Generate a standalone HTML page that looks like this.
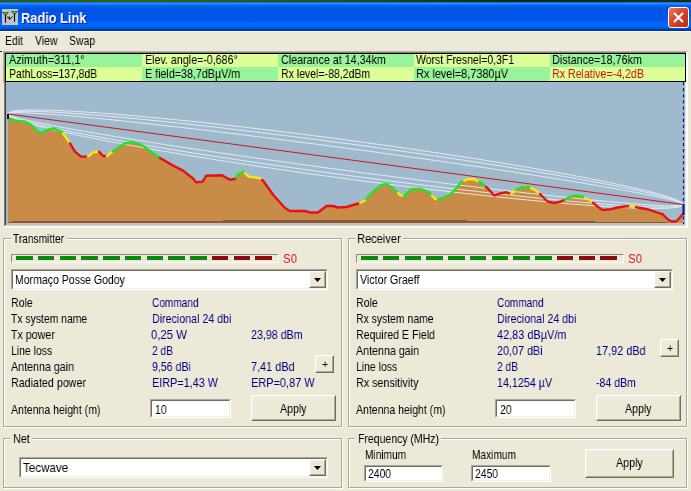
<!DOCTYPE html>
<html><head><meta charset="utf-8"><title>Radio Link</title>
<style>
html,body{margin:0;padding:0;}
body{width:691px;height:491px;background:#ece9d8;position:relative;overflow:hidden;font-family:"Liberation Sans",sans-serif;}
.t{position:absolute;white-space:nowrap;transform-origin:0 0;line-height:16px;display:block;will-change:transform;}
</style></head><body>
<div style="position:absolute;left:0px;top:0px;width:691px;height:2px;background:linear-gradient(to right,#2a5a1a 0%,#2c661a 20%,#20501a 50%,#0c2812 75%,#10301a 100%);"></div>
<div style="position:absolute;left:0px;top:31px;width:691px;height:1px;background:#fbfbf8;"></div>
<div style="position:absolute;left:0px;top:2px;width:691px;height:29px;background:linear-gradient(to bottom,#0048d8 0%,#3593ff 4%,#288eff 6%,#127dff 8%,#036ffc 10%,#0262ee 14%,#0057e5 20%,#0054e3 24%,#0055eb 56%,#005bf5 66%,#026afe 76%,#0062ef 86%,#0052d6 92%,#0040ab 94%,#003092 100%);"></div>
<svg style="position:absolute;left:2px;top:9px" width="16" height="16" viewBox="0 0 16 16">
<rect width="16" height="16" fill="#c4c2c4"/>
<polygon points="0,3 7,3 3.5,7" fill="#104010"/>
<polygon points="9,2 16,2 12.5,6" fill="#104010"/>
<polygon points="1.2,3.6 5.8,3.6 3.5,6.2" fill="#30e050"/>
<polygon points="10.2,2.6 14.8,2.6 12.5,5.2" fill="#30e050"/>
<path d="M3.5 5.5 V13.8 M12.5 4.5 V12.8" stroke="#000" stroke-width="1.1" fill="none"/>
<path d="M4.9 7.9 L6.5 9 L7.2 7.7 L7.5 10.6 L10.7 7.4" stroke="#000" stroke-width="0.9" fill="none"/>
</svg>
<span class="t" style="left:21.05px;top:9.95px;font-size:14px;color:#fff;font-weight:bold;transform:scaleX(0.9140);text-shadow:1px 1px 0 #0a1e8c;">Radio Link</span>
<div style="position:absolute;left:668px;top:7px;width:19px;height:19px;border:1px solid #fff;border-radius:3px;background:linear-gradient(135deg,#e8806a 0%,#dd4f33 35%,#c9371c 75%,#b52a12 100%);"></div>
<svg style="position:absolute;left:668px;top:7px" width="21" height="21" viewBox="0 0 21 21"><path d="M6 6 L15 15 M15 6 L6 15" stroke="#fff" stroke-width="2.2" fill="none"/></svg>
<span class="t" style="left:5.48px;top:32.84px;font-size:12px;color:#000;transform:scaleX(0.8705);">Edit</span>
<span class="t" style="left:35.48px;top:32.84px;font-size:12px;color:#000;transform:scaleX(0.8646);">View</span>
<span class="t" style="left:69.48px;top:32.84px;font-size:12px;color:#000;transform:scaleX(0.8728);">Swap</span>
<div style="position:absolute;left:0px;top:51px;width:2px;height:1px;background:#222;"></div>
<div style="position:absolute;left:3px;top:51px;width:684px;height:32px;background:#b8b4a6;"></div>
<div style="position:absolute;left:4px;top:52px;width:683px;height:30px;background:#808080;"></div>
<div style="position:absolute;left:686px;top:52px;width:2px;height:31px;background:#fff;"></div>
<div style="position:absolute;left:5px;top:53px;width:681px;height:29px;background:#000;"></div>
<div style="position:absolute;left:6px;top:54px;width:679px;height:27px;background:#98f498;"></div>
<div style="position:absolute;left:6px;top:54px;width:135.5px;height:13px;background:#98f498;"></div>
<div style="position:absolute;left:6px;top:67px;width:135.5px;height:14px;background:#dcff98;"></div>
<div style="position:absolute;left:141.5px;top:54px;width:136px;height:13px;background:#dcff98;"></div>
<div style="position:absolute;left:141.5px;top:67px;width:136px;height:14px;background:#98f498;"></div>
<div style="position:absolute;left:277.5px;top:54px;width:136px;height:13px;background:#98f498;"></div>
<div style="position:absolute;left:277.5px;top:67px;width:136px;height:14px;background:#dcff98;"></div>
<div style="position:absolute;left:413.5px;top:54px;width:136px;height:13px;background:#dcff98;"></div>
<div style="position:absolute;left:413.5px;top:67px;width:136px;height:14px;background:#98f498;"></div>
<div style="position:absolute;left:549.5px;top:54px;width:135.5px;height:13px;background:#98f498;"></div>
<div style="position:absolute;left:549.5px;top:67px;width:135.5px;height:14px;background:#dcff98;"></div>
<span class="t" style="left:8.50px;top:52.00px;font-size:13px;color:#000;transform:scaleX(0.8279);">Azimuth=311,1°</span>
<span class="t" style="left:9.32px;top:66.00px;font-size:13px;color:#000;transform:scaleX(0.8002);">PathLoss=137,8dB</span>
<span class="t" style="left:145.21px;top:52.00px;font-size:13px;color:#000;transform:scaleX(0.8212);">Elev. angle=-0,686°</span>
<span class="t" style="left:145.21px;top:66.00px;font-size:13px;color:#000;transform:scaleX(0.8232);">E field=38,7dBµV/m</span>
<span class="t" style="left:280.81px;top:52.00px;font-size:13px;color:#000;transform:scaleX(0.8248);">Clearance at 14,34km</span>
<span class="t" style="left:280.81px;top:66.00px;font-size:13px;color:#000;transform:scaleX(0.8095);">Rx level=-88,2dBm</span>
<span class="t" style="left:416.12px;top:52.00px;font-size:13px;color:#000;transform:scaleX(0.8082);">Worst Fresnel=0,3F1</span>
<span class="t" style="left:416.10px;top:66.00px;font-size:13px;color:#000;transform:scaleX(0.8392);">Rx level=8,7380µV</span>
<span class="t" style="left:552.10px;top:52.00px;font-size:13px;color:#000;transform:scaleX(0.8322);">Distance=18,76km</span>
<span class="t" style="left:552.11px;top:66.00px;font-size:13px;color:#d01010;transform:scaleX(0.8179);">Rx Relative=-4,2dB</span>
<svg style="position:absolute;left:0;top:0" width="691" height="491" viewBox="0 0 691 491">
<defs><clipPath id="cc"><rect x="6" y="82" width="679" height="143"/></clipPath></defs>
<rect x="4" y="82" width="1" height="145" fill="#808080"/><rect x="5" y="82" width="1" height="144" fill="#404040"/>
<rect x="5" y="225" width="682" height="1" fill="#d4d0c8"/><rect x="4" y="226" width="684" height="1" fill="#fff"/><rect x="4" y="227" width="684" height="1" fill="#f6f4ec"/>
<rect x="685" y="82" width="1" height="144" fill="#e4e2dc"/><rect x="686" y="82" width="2" height="145" fill="#fff"/>
<g clip-path="url(#cc)">
<rect x="6" y="82" width="680" height="143" fill="#9fbacd"/>
<polygon points="8,224 8.0,118.5 16.6,120.6 25.0,121.6 31.6,125.0 36.6,130.6 41.6,133.3 46.6,130.0 53.3,128.3 61.6,131.6 66.6,138.3 70.0,143.3 75.0,151.6 81.0,156.6 88.0,156.6 93.0,152.3 99.0,151.6 103.0,156.0 107.0,156.0 113.0,151.0 125.0,143.3 133.0,142.3 143.0,145.6 153.0,153.3 160.0,158.0 173.0,165.6 183.0,170.6 193.0,178.5 196.0,182.3 202.5,181.7 206.2,175.8 222.0,175.2 230.0,179.7 235.0,179.0 238.3,174.0 243.3,171.5 248.3,176.5 260.0,178.2 263.3,181.0 273.3,195.0 285.0,208.0 290.0,211.0 305.0,211.0 310.0,212.5 318.0,212.5 326.5,206.0 333.0,206.0 338.0,207.5 346.5,207.0 360.0,203.0 365.0,200.5 373.0,191.5 381.5,185.0 386.5,184.0 393.0,188.0 400.0,195.0 404.0,196.0 411.5,189.0 421.5,189.0 430.0,193.0 435.0,199.0 440.0,199.0 450.0,195.0 456.5,188.0 461.0,182.0 467.7,179.0 474.3,179.2 482.6,184.0 489.3,190.0 494.3,195.5 501.0,193.2 506.0,192.2 511.0,194.2 516.0,190.0 521.0,187.2 529.0,187.2 536.0,190.5 541.0,195.0 547.5,201.5 554.0,203.0 561.0,201.5 567.5,198.2 574.0,195.5 582.5,196.5 591.0,201.0 597.5,206.5 602.5,210.0 611.0,209.2 617.5,207.5 624.0,206.5 632.5,206.0 637.5,207.5 647.5,209.2 656.0,212.2 662.5,214.2 668.0,219.5 671.5,221.5 676.0,221.5 679.0,218.5 683.0,214.0 683,224" fill="#c88c48"/>
<rect x="6" y="223" width="680" height="2" fill="#c2c2c2"/>
<rect x="8" y="222" width="660" height="1" fill="#8a5a38"/>
<rect x="12" y="221" width="583" height="1" fill="#8a5a38"/>
<rect x="223" y="220" width="244" height="1" fill="#8a5a38"/>
<polyline points="8.0,114.0 8.0,113.8 8.2,113.7 8.4,113.5 8.7,113.4 9.0,113.3 9.5,113.1 10.0,113.0 10.7,113.0 11.4,112.9 12.2,112.8 13.0,112.7 14.0,112.7 15.0,112.7 16.1,112.6 17.3,112.6 18.6,112.6 20.0,112.6 21.4,112.7 22.9,112.7 24.5,112.8 26.2,112.8 28.0,112.9 29.8,113.0 31.7,113.1 33.7,113.2 35.8,113.3 37.9,113.4 40.1,113.5 42.4,113.7 44.8,113.8 47.2,114.0 49.7,114.2 52.3,114.4 55.0,114.6 57.7,114.8 60.5,115.0 63.4,115.3 66.4,115.5 69.4,115.8 72.5,116.1 75.6,116.3 78.8,116.6 82.1,116.9 85.5,117.2 88.9,117.6 92.3,117.9 95.9,118.2 99.5,118.6 103.1,119.0 106.9,119.3 110.6,119.7 114.5,120.1 118.4,120.5 122.3,120.9 126.3,121.3 130.4,121.8 134.5,122.2 138.6,122.7 142.9,123.1 147.1,123.6 151.4,124.1 155.8,124.6 160.2,125.0 164.7,125.5 169.2,126.1 173.7,126.6 178.3,127.1 182.9,127.6 187.6,128.2 192.3,128.7 197.0,129.3 201.8,129.8 206.6,130.4 211.5,131.0 216.3,131.6 221.3,132.2 226.2,132.8 231.2,133.4 236.2,134.0 241.2,134.6 246.3,135.2 251.3,135.9 256.4,136.5 261.6,137.1 266.7,137.8 271.9,138.4 277.1,139.1 282.3,139.8 287.5,140.4 292.7,141.1 297.9,141.8 303.2,142.5 308.5,143.2 313.7,143.8 319.0,144.5 324.3,145.2 329.6,145.9 334.9,146.6 340.2,147.3 345.5,148.1 350.8,148.8 356.1,149.5 361.4,150.2 366.7,150.9 372.0,151.6 377.3,152.4 382.5,153.1 387.8,153.8 393.1,154.5 398.3,155.3 403.5,156.0 408.7,156.7 413.9,157.5 419.1,158.2 424.3,158.9 429.4,159.7 434.6,160.4 439.7,161.1 444.7,161.9 449.8,162.6 454.8,163.3 459.8,164.0 464.8,164.8 469.7,165.5 474.7,166.2 479.5,166.9 484.4,167.7 489.2,168.4 494.0,169.1 498.7,169.8 503.4,170.5 508.1,171.2 512.7,171.9 517.3,172.6 521.8,173.3 526.3,174.0 530.8,174.7 535.2,175.4 539.6,176.1 543.9,176.8 548.1,177.5 552.4,178.1 556.5,178.8 560.6,179.5 564.7,180.1 568.7,180.8 572.6,181.4 576.5,182.1 580.4,182.7 584.1,183.3 587.9,184.0 591.5,184.6 595.1,185.2 598.7,185.8 602.1,186.4 605.5,187.0 608.9,187.6 612.2,188.1 615.4,188.7 618.5,189.3 621.6,189.8 624.6,190.4 627.6,190.9 630.5,191.5 633.3,192.0 636.0,192.5 638.7,193.0 641.3,193.5 643.8,194.0 646.2,194.5 648.6,195.0 650.9,195.4 653.1,195.9 655.2,196.3 657.3,196.8 659.3,197.2 661.2,197.6 663.0,198.0 664.8,198.4 666.5,198.8 668.1,199.2 669.6,199.6 671.0,199.9 672.4,200.3 673.7,200.6 674.9,201.0 676.0,201.3 677.0,201.6 678.0,201.9 678.8,202.2 679.6,202.5 680.3,202.7 681.0,203.0 681.5,203.2 682.0,203.5 682.3,203.7 682.6,203.9 682.8,204.1 683.0,204.3 683.0,204.5" fill="none" stroke="#eaf0f5" stroke-width="0.9"/>
<polyline points="8.0,114.0 8.0,114.2 8.2,114.4 8.4,114.6 8.7,114.8 9.0,115.0 9.5,115.3 10.0,115.5 10.7,115.8 11.4,116.0 12.2,116.3 13.0,116.6 14.0,116.9 15.0,117.2 16.1,117.5 17.3,117.9 18.6,118.2 20.0,118.6 21.4,118.9 22.9,119.3 24.5,119.7 26.2,120.1 28.0,120.5 29.8,120.9 31.7,121.3 33.7,121.7 35.8,122.2 37.9,122.6 40.1,123.1 42.4,123.5 44.8,124.0 47.2,124.5 49.7,125.0 52.3,125.5 55.0,126.0 57.7,126.5 60.5,127.0 63.4,127.6 66.4,128.1 69.4,128.7 72.5,129.2 75.6,129.8 78.8,130.4 82.1,130.9 85.5,131.5 88.9,132.1 92.3,132.7 95.9,133.3 99.5,133.9 103.1,134.5 106.9,135.2 110.6,135.8 114.5,136.4 118.4,137.1 122.3,137.7 126.3,138.4 130.4,139.0 134.5,139.7 138.6,140.4 142.9,141.0 147.1,141.7 151.4,142.4 155.8,143.1 160.2,143.8 164.7,144.5 169.2,145.2 173.7,145.9 178.3,146.6 182.9,147.3 187.6,148.0 192.3,148.7 197.0,149.4 201.8,150.1 206.6,150.8 211.5,151.6 216.3,152.3 221.3,153.0 226.2,153.7 231.2,154.5 236.2,155.2 241.2,155.9 246.3,156.6 251.3,157.4 256.4,158.1 261.6,158.8 266.7,159.6 271.9,160.3 277.1,161.0 282.3,161.8 287.5,162.5 292.7,163.2 297.9,164.0 303.2,164.7 308.5,165.4 313.7,166.1 319.0,166.9 324.3,167.6 329.6,168.3 334.9,169.0 340.2,169.7 345.5,170.4 350.8,171.2 356.1,171.9 361.4,172.6 366.7,173.3 372.0,174.0 377.3,174.7 382.5,175.3 387.8,176.0 393.1,176.7 398.3,177.4 403.5,178.1 408.7,178.7 413.9,179.4 419.1,180.1 424.3,180.7 429.4,181.4 434.6,182.0 439.7,182.6 444.7,183.3 449.8,183.9 454.8,184.5 459.8,185.1 464.8,185.7 469.7,186.3 474.7,186.9 479.5,187.5 484.4,188.1 489.2,188.7 494.0,189.2 498.7,189.8 503.4,190.3 508.1,190.9 512.7,191.4 517.3,191.9 521.8,192.4 526.3,193.0 530.8,193.5 535.2,193.9 539.6,194.4 543.9,194.9 548.1,195.4 552.4,195.8 556.5,196.3 560.6,196.7 564.7,197.2 568.7,197.6 572.6,198.0 576.5,198.4 580.4,198.8 584.1,199.2 587.9,199.5 591.5,199.9 595.1,200.3 598.7,200.6 602.1,200.9 605.5,201.3 608.9,201.6 612.2,201.9 615.4,202.2 618.5,202.4 621.6,202.7 624.6,203.0 627.6,203.2 630.5,203.5 633.3,203.7 636.0,203.9 638.7,204.1 641.3,204.3 643.8,204.5 646.2,204.7 648.6,204.8 650.9,205.0 653.1,205.1 655.2,205.2 657.3,205.3 659.3,205.4 661.2,205.5 663.0,205.6 664.8,205.7 666.5,205.7 668.1,205.8 669.6,205.8 671.0,205.9 672.4,205.9 673.7,205.9 674.9,205.9 676.0,205.8 677.0,205.8 678.0,205.8 678.8,205.7 679.6,205.6 680.3,205.5 681.0,205.5 681.5,205.4 682.0,205.2 682.3,205.1 682.6,205.0 682.8,204.8 683.0,204.7 683.0,204.5" fill="none" stroke="#eaf0f5" stroke-width="0.9"/>
<polyline points="8.0,114.0 8.0,113.8 8.2,113.5 8.4,113.3 8.7,113.1 9.0,112.9 9.5,112.7 10.0,112.5 10.7,112.4 11.4,112.2 12.2,112.1 13.0,112.0 14.0,111.8 15.0,111.7 16.1,111.6 17.3,111.6 18.6,111.5 20.0,111.4 21.4,111.4 22.9,111.3 24.5,111.3 26.2,111.3 28.0,111.3 29.8,111.3 31.7,111.3 33.7,111.4 35.8,111.4 37.9,111.5 40.1,111.6 42.4,111.6 44.8,111.7 47.2,111.8 49.7,112.0 52.3,112.1 55.0,112.2 57.7,112.4 60.5,112.6 63.4,112.7 66.4,112.9 69.4,113.1 72.5,113.3 75.6,113.6 78.8,113.8 82.1,114.0 85.5,114.3 88.9,114.6 92.3,114.8 95.9,115.1 99.5,115.4 103.1,115.7 106.9,116.1 110.6,116.4 114.5,116.7 118.4,117.1 122.3,117.4 126.3,117.8 130.4,118.2 134.5,118.6 138.6,119.0 142.9,119.4 147.1,119.8 151.4,120.3 155.8,120.7 160.2,121.2 164.7,121.6 169.2,122.1 173.7,122.6 178.3,123.1 182.9,123.6 187.6,124.1 192.3,124.6 197.0,125.1 201.8,125.7 206.6,126.2 211.5,126.7 216.3,127.3 221.3,127.9 226.2,128.4 231.2,129.0 236.2,129.6 241.2,130.2 246.3,130.8 251.3,131.4 256.4,132.0 261.6,132.7 266.7,133.3 271.9,133.9 277.1,134.6 282.3,135.2 287.5,135.9 292.7,136.5 297.9,137.2 303.2,137.9 308.5,138.5 313.7,139.2 319.0,139.9 324.3,140.6 329.6,141.3 334.9,142.0 340.2,142.7 345.5,143.4 350.8,144.1 356.1,144.8 361.4,145.6 366.7,146.3 372.0,147.0 377.3,147.7 382.5,148.5 387.8,149.2 393.1,149.9 398.3,150.7 403.5,151.4 408.7,152.2 413.9,152.9 419.1,153.7 424.3,154.4 429.4,155.2 434.6,155.9 439.7,156.7 444.7,157.4 449.8,158.2 454.8,158.9 459.8,159.7 464.8,160.4 469.7,161.2 474.7,161.9 479.5,162.7 484.4,163.4 489.2,164.2 494.0,164.9 498.7,165.7 503.4,166.4 508.1,167.2 512.7,167.9 517.3,168.7 521.8,169.4 526.3,170.1 530.8,170.9 535.2,171.6 539.6,172.3 543.9,173.0 548.1,173.8 552.4,174.5 556.5,175.2 560.6,175.9 564.7,176.6 568.7,177.3 572.6,178.0 576.5,178.7 580.4,179.4 584.1,180.0 587.9,180.7 591.5,181.4 595.1,182.1 598.7,182.7 602.1,183.4 605.5,184.0 608.9,184.7 612.2,185.3 615.4,185.9 618.5,186.5 621.6,187.2 624.6,187.8 627.6,188.4 630.5,189.0 633.3,189.6 636.0,190.1 638.7,190.7 641.3,191.3 643.8,191.8 646.2,192.4 648.6,192.9 650.9,193.4 653.1,194.0 655.2,194.5 657.3,195.0 659.3,195.5 661.2,196.0 663.0,196.5 664.8,196.9 666.5,197.4 668.1,197.8 669.6,198.3 671.0,198.7 672.4,199.1 673.7,199.6 674.9,200.0 676.0,200.3 677.0,200.7 678.0,201.1 678.8,201.5 679.6,201.8 680.3,202.2 681.0,202.5 681.5,202.8 682.0,203.1 682.3,203.4 682.6,203.7 682.8,204.0 683.0,204.2 683.0,204.5" fill="none" stroke="#eaf0f5" stroke-width="0.9"/>
<polyline points="8.0,114.0 8.0,114.3 8.2,114.5 8.4,114.8 8.7,115.1 9.0,115.4 9.5,115.7 10.0,116.0 10.7,116.3 11.4,116.7 12.2,117.0 13.0,117.4 14.0,117.8 15.0,118.2 16.1,118.5 17.3,118.9 18.6,119.4 20.0,119.8 21.4,120.2 22.9,120.7 24.5,121.1 26.2,121.6 28.0,122.0 29.8,122.5 31.7,123.0 33.7,123.5 35.8,124.0 37.9,124.5 40.1,125.1 42.4,125.6 44.8,126.1 47.2,126.7 49.7,127.2 52.3,127.8 55.0,128.4 57.7,128.9 60.5,129.5 63.4,130.1 66.4,130.7 69.4,131.3 72.5,132.0 75.6,132.6 78.8,133.2 82.1,133.8 85.5,134.5 88.9,135.1 92.3,135.8 95.9,136.4 99.5,137.1 103.1,137.8 106.9,138.5 110.6,139.1 114.5,139.8 118.4,140.5 122.3,141.2 126.3,141.9 130.4,142.6 134.5,143.3 138.6,144.0 142.9,144.7 147.1,145.5 151.4,146.2 155.8,146.9 160.2,147.6 164.7,148.4 169.2,149.1 173.7,149.8 178.3,150.6 182.9,151.3 187.6,152.1 192.3,152.8 197.0,153.6 201.8,154.3 206.6,155.1 211.5,155.8 216.3,156.6 221.3,157.3 226.2,158.1 231.2,158.8 236.2,159.6 241.2,160.3 246.3,161.1 251.3,161.8 256.4,162.6 261.6,163.3 266.7,164.1 271.9,164.8 277.1,165.6 282.3,166.3 287.5,167.1 292.7,167.8 297.9,168.6 303.2,169.3 308.5,170.0 313.7,170.8 319.0,171.5 324.3,172.2 329.6,172.9 334.9,173.7 340.2,174.4 345.5,175.1 350.8,175.8 356.1,176.5 361.4,177.2 366.7,177.9 372.0,178.6 377.3,179.3 382.5,180.0 387.8,180.6 393.1,181.3 398.3,182.0 403.5,182.6 408.7,183.3 413.9,183.9 419.1,184.6 424.3,185.2 429.4,185.8 434.6,186.5 439.7,187.1 444.7,187.7 449.8,188.3 454.8,188.9 459.8,189.5 464.8,190.1 469.7,190.6 474.7,191.2 479.5,191.8 484.4,192.3 489.2,192.8 494.0,193.4 498.7,193.9 503.4,194.4 508.1,194.9 512.7,195.4 517.3,195.9 521.8,196.4 526.3,196.9 530.8,197.3 535.2,197.8 539.6,198.2 543.9,198.7 548.1,199.1 552.4,199.5 556.5,199.9 560.6,200.3 564.7,200.7 568.7,201.1 572.6,201.4 576.5,201.8 580.4,202.1 584.1,202.4 587.9,202.8 591.5,203.1 595.1,203.4 598.7,203.7 602.1,203.9 605.5,204.2 608.9,204.5 612.2,204.7 615.4,204.9 618.5,205.2 621.6,205.4 624.6,205.6 627.6,205.8 630.5,205.9 633.3,206.1 636.0,206.3 638.7,206.4 641.3,206.5 643.8,206.7 646.2,206.8 648.6,206.9 650.9,206.9 653.1,207.0 655.2,207.1 657.3,207.1 659.3,207.2 661.2,207.2 663.0,207.2 664.8,207.2 666.5,207.2 668.1,207.2 669.6,207.1 671.0,207.1 672.4,207.0 673.7,206.9 674.9,206.9 676.0,206.8 677.0,206.7 678.0,206.5 678.8,206.4 679.6,206.3 680.3,206.1 681.0,206.0 681.5,205.8 682.0,205.6 682.3,205.4 682.6,205.2 682.8,205.0 683.0,204.7 683.0,204.5" fill="none" stroke="#eaf0f5" stroke-width="0.9"/>
<polyline points="8.0,114.0 8.0,113.7 8.2,113.4 8.4,113.1 8.7,112.9 9.0,112.6 9.5,112.4 10.0,112.1 10.7,111.9 11.4,111.7 12.2,111.5 13.0,111.3 14.0,111.2 15.0,111.0 16.1,110.9 17.3,110.7 18.6,110.6 20.0,110.5 21.4,110.4 22.9,110.3 24.5,110.2 26.2,110.2 28.0,110.1 29.8,110.1 31.7,110.0 33.7,110.0 35.8,110.0 37.9,110.0 40.1,110.0 42.4,110.1 44.8,110.1 47.2,110.2 49.7,110.3 52.3,110.3 55.0,110.4 57.7,110.5 60.5,110.6 63.4,110.8 66.4,110.9 69.4,111.1 72.5,111.2 75.6,111.4 78.8,111.6 82.1,111.8 85.5,112.0 88.9,112.2 92.3,112.5 95.9,112.7 99.5,113.0 103.1,113.3 106.9,113.5 110.6,113.8 114.5,114.1 118.4,114.4 122.3,114.8 126.3,115.1 130.4,115.5 134.5,115.8 138.6,116.2 142.9,116.6 147.1,117.0 151.4,117.4 155.8,117.8 160.2,118.2 164.7,118.6 169.2,119.1 173.7,119.5 178.3,120.0 182.9,120.5 187.6,120.9 192.3,121.4 197.0,121.9 201.8,122.4 206.6,122.9 211.5,123.5 216.3,124.0 221.3,124.6 226.2,125.1 231.2,125.7 236.2,126.2 241.2,126.8 246.3,127.4 251.3,128.0 256.4,128.6 261.6,129.2 266.7,129.8 271.9,130.4 277.1,131.1 282.3,131.7 287.5,132.4 292.7,133.0 297.9,133.7 303.2,134.3 308.5,135.0 313.7,135.7 319.0,136.4 324.3,137.0 329.6,137.7 334.9,138.4 340.2,139.1 345.5,139.9 350.8,140.6 356.1,141.3 361.4,142.0 366.7,142.7 372.0,143.5 377.3,144.2 382.5,144.9 387.8,145.7 393.1,146.4 398.3,147.2 403.5,147.9 408.7,148.7 413.9,149.4 419.1,150.2 424.3,151.0 429.4,151.7 434.6,152.5 439.7,153.2 444.7,154.0 449.8,154.8 454.8,155.6 459.8,156.3 464.8,157.1 469.7,157.9 474.7,158.6 479.5,159.4 484.4,160.2 489.2,161.0 494.0,161.7 498.7,162.5 503.4,163.3 508.1,164.0 512.7,164.8 517.3,165.6 521.8,166.4 526.3,167.1 530.8,167.9 535.2,168.6 539.6,169.4 543.9,170.2 548.1,170.9 552.4,171.7 556.5,172.4 560.6,173.1 564.7,173.9 568.7,174.6 572.6,175.4 576.5,176.1 580.4,176.8 584.1,177.5 587.9,178.2 591.5,179.0 595.1,179.7 598.7,180.4 602.1,181.1 605.5,181.8 608.9,182.4 612.2,183.1 615.4,183.8 618.5,184.5 621.6,185.1 624.6,185.8 627.6,186.4 630.5,187.1 633.3,187.7 636.0,188.3 638.7,188.9 641.3,189.6 643.8,190.2 646.2,190.8 648.6,191.4 650.9,191.9 653.1,192.5 655.2,193.1 657.3,193.6 659.3,194.2 661.2,194.7 663.0,195.3 664.8,195.8 666.5,196.3 668.1,196.8 669.6,197.3 671.0,197.8 672.4,198.3 673.7,198.7 674.9,199.2 676.0,199.6 677.0,200.1 678.0,200.5 678.8,200.9 679.6,201.3 680.3,201.7 681.0,202.1 681.5,202.5 682.0,202.8 682.3,203.2 682.6,203.5 682.8,203.9 683.0,204.2 683.0,204.5" fill="none" stroke="#eaf0f5" stroke-width="0.9"/>
<polyline points="8.0,114.0 8.0,114.3 8.2,114.6 8.4,115.0 8.7,115.3 9.0,115.7 9.5,116.0 10.0,116.4 10.7,116.8 11.4,117.2 12.2,117.6 13.0,118.0 14.0,118.4 15.0,118.9 16.1,119.3 17.3,119.8 18.6,120.2 20.0,120.7 21.4,121.2 22.9,121.7 24.5,122.2 26.2,122.7 28.0,123.2 29.8,123.8 31.7,124.3 33.7,124.9 35.8,125.4 37.9,126.0 40.1,126.6 42.4,127.1 44.8,127.7 47.2,128.3 49.7,128.9 52.3,129.6 55.0,130.2 57.7,130.8 60.5,131.4 63.4,132.1 66.4,132.7 69.4,133.4 72.5,134.0 75.6,134.7 78.8,135.4 82.1,136.1 85.5,136.7 88.9,137.4 92.3,138.1 95.9,138.8 99.5,139.5 103.1,140.3 106.9,141.0 110.6,141.7 114.5,142.4 118.4,143.1 122.3,143.9 126.3,144.6 130.4,145.4 134.5,146.1 138.6,146.8 142.9,147.6 147.1,148.3 151.4,149.1 155.8,149.9 160.2,150.6 164.7,151.4 169.2,152.1 173.7,152.9 178.3,153.7 182.9,154.5 187.6,155.2 192.3,156.0 197.0,156.8 201.8,157.5 206.6,158.3 211.5,159.1 216.3,159.9 221.3,160.6 226.2,161.4 231.2,162.2 236.2,162.9 241.2,163.7 246.3,164.5 251.3,165.3 256.4,166.0 261.6,166.8 266.7,167.5 271.9,168.3 277.1,169.1 282.3,169.8 287.5,170.6 292.7,171.3 297.9,172.1 303.2,172.8 308.5,173.6 313.7,174.3 319.0,175.0 324.3,175.8 329.6,176.5 334.9,177.2 340.2,177.9 345.5,178.6 350.8,179.4 356.1,180.1 361.4,180.8 366.7,181.5 372.0,182.1 377.3,182.8 382.5,183.5 387.8,184.2 393.1,184.8 398.3,185.5 403.5,186.1 408.7,186.8 413.9,187.4 419.1,188.1 424.3,188.7 429.4,189.3 434.6,189.9 439.7,190.5 444.7,191.1 449.8,191.7 454.8,192.3 459.8,192.8 464.8,193.4 469.7,193.9 474.7,194.5 479.5,195.0 484.4,195.6 489.2,196.1 494.0,196.6 498.7,197.1 503.4,197.6 508.1,198.0 512.7,198.5 517.3,199.0 521.8,199.4 526.3,199.9 530.8,200.3 535.2,200.7 539.6,201.1 543.9,201.5 548.1,201.9 552.4,202.3 556.5,202.7 560.6,203.0 564.7,203.4 568.7,203.7 572.6,204.1 576.5,204.4 580.4,204.7 584.1,205.0 587.9,205.2 591.5,205.5 595.1,205.8 598.7,206.0 602.1,206.3 605.5,206.5 608.9,206.7 612.2,206.9 615.4,207.1 618.5,207.3 621.6,207.4 624.6,207.6 627.6,207.7 630.5,207.9 633.3,208.0 636.0,208.1 638.7,208.2 641.3,208.2 643.8,208.3 646.2,208.4 648.6,208.4 650.9,208.5 653.1,208.5 655.2,208.5 657.3,208.5 659.3,208.5 661.2,208.4 663.0,208.4 664.8,208.3 666.5,208.3 668.1,208.2 669.6,208.1 671.0,208.0 672.4,207.9 673.7,207.8 674.9,207.6 676.0,207.5 677.0,207.3 678.0,207.2 678.8,207.0 679.6,206.8 680.3,206.6 681.0,206.4 681.5,206.1 682.0,205.9 682.3,205.6 682.6,205.4 682.8,205.1 683.0,204.8 683.0,204.5" fill="none" stroke="#eaf0f5" stroke-width="0.9"/>
<polyline points="8.0,118.5 16.6,120.6 25.0,121.6 31.6,125.0 36.6,130.6 41.6,133.3 46.6,130.0 53.3,128.3 61.6,131.6 63.0,133.5" fill="none" stroke="#22e422" stroke-width="2.4" stroke-linejoin="round" stroke-linecap="round"/>
<polyline points="63.0,133.5 66.6,138.3 70.0,143.3" fill="none" stroke="#f4e81c" stroke-width="2.4" stroke-linejoin="round" stroke-linecap="round"/>
<polyline points="70.0,143.3 75.0,151.6 81.0,156.6 88.0,156.6" fill="none" stroke="#e81010" stroke-width="2.4" stroke-linejoin="round" stroke-linecap="round"/>
<polyline points="88.0,156.6 93.0,152.3 99.0,151.6" fill="none" stroke="#f4e81c" stroke-width="2.4" stroke-linejoin="round" stroke-linecap="round"/>
<polyline points="99.0,151.6 103.0,156.0 107.0,156.0" fill="none" stroke="#e81010" stroke-width="2.4" stroke-linejoin="round" stroke-linecap="round"/>
<polyline points="107.0,156.0 113.0,151.0" fill="none" stroke="#f4e81c" stroke-width="2.4" stroke-linejoin="round" stroke-linecap="round"/>
<polyline points="113.0,151.0 125.0,143.3 133.0,142.3 143.0,145.6 153.0,153.3 160.0,158.0" fill="none" stroke="#22e422" stroke-width="2.4" stroke-linejoin="round" stroke-linecap="round"/>
<polyline points="160.0,158.0 173.0,165.6 183.0,170.6 193.0,178.5 196.0,182.3 202.5,181.7 206.2,175.8 222.0,175.2 230.0,179.7 235.0,179.0 236.0,177.5" fill="none" stroke="#e81010" stroke-width="2.4" stroke-linejoin="round" stroke-linecap="round"/>
<polyline points="236.0,177.5 238.3,174.0 243.3,171.5 245.0,173.2" fill="none" stroke="#22e422" stroke-width="2.4" stroke-linejoin="round" stroke-linecap="round"/>
<polyline points="245.0,173.2 248.3,176.5 260.0,178.2 262.0,179.9" fill="none" stroke="#f4e81c" stroke-width="2.4" stroke-linejoin="round" stroke-linecap="round"/>
<polyline points="262.0,179.9 263.3,181.0 273.3,195.0 285.0,208.0 290.0,211.0 305.0,211.0 310.0,212.5 318.0,212.5 326.5,206.0 333.0,206.0 338.0,207.5 346.5,207.0 360.0,203.0" fill="none" stroke="#e81010" stroke-width="2.4" stroke-linejoin="round" stroke-linecap="round"/>
<polyline points="360.0,203.0 365.0,200.5 366.0,199.4" fill="none" stroke="#f4e81c" stroke-width="2.4" stroke-linejoin="round" stroke-linecap="round"/>
<polyline points="366.0,199.4 373.0,191.5 381.5,185.0 386.5,184.0 393.0,188.0 398.0,193.0" fill="none" stroke="#22e422" stroke-width="2.4" stroke-linejoin="round" stroke-linecap="round"/>
<polyline points="398.0,193.0 400.0,195.0 404.0,196.0" fill="none" stroke="#f4e81c" stroke-width="2.4" stroke-linejoin="round" stroke-linecap="round"/>
<polyline points="404.0,196.0 411.5,189.0 421.5,189.0 430.0,193.0 432.0,195.4" fill="none" stroke="#22e422" stroke-width="2.4" stroke-linejoin="round" stroke-linecap="round"/>
<polyline points="432.0,195.4 435.0,199.0 438.0,199.0" fill="none" stroke="#f4e81c" stroke-width="2.4" stroke-linejoin="round" stroke-linecap="round"/>
<polyline points="438.0,199.0 440.0,199.0 450.0,195.0 456.5,188.0 461.0,182.0 464.0,180.7" fill="none" stroke="#22e422" stroke-width="2.4" stroke-linejoin="round" stroke-linecap="round"/>
<polyline points="464.0,180.7 467.7,179.0 474.3,179.2 479.0,181.9" fill="none" stroke="#f4e81c" stroke-width="2.4" stroke-linejoin="round" stroke-linecap="round"/>
<polyline points="479.0,181.9 482.6,184.0 486.0,187.0" fill="none" stroke="#22e422" stroke-width="2.4" stroke-linejoin="round" stroke-linecap="round"/>
<polyline points="486.0,187.0 489.3,190.0 494.3,195.5 501.0,193.2 506.0,192.2 511.0,194.2" fill="none" stroke="#e81010" stroke-width="2.4" stroke-linejoin="round" stroke-linecap="round"/>
<polyline points="511.0,194.2 516.0,190.0" fill="none" stroke="#f4e81c" stroke-width="2.4" stroke-linejoin="round" stroke-linecap="round"/>
<polyline points="516.0,190.0 521.0,187.2 529.0,187.2 531.0,188.1" fill="none" stroke="#22e422" stroke-width="2.4" stroke-linejoin="round" stroke-linecap="round"/>
<polyline points="531.0,188.1 536.0,190.5 540.0,194.1" fill="none" stroke="#f4e81c" stroke-width="2.4" stroke-linejoin="round" stroke-linecap="round"/>
<polyline points="540.0,194.1 541.0,195.0 547.5,201.5 554.0,203.0 561.0,201.5 565.0,199.5" fill="none" stroke="#e81010" stroke-width="2.4" stroke-linejoin="round" stroke-linecap="round"/>
<polyline points="565.0,199.5 567.5,198.2 574.0,195.5 582.5,196.5 585.0,197.8" fill="none" stroke="#22e422" stroke-width="2.4" stroke-linejoin="round" stroke-linecap="round"/>
<polyline points="585.0,197.8 591.0,201.0 593.0,202.7" fill="none" stroke="#f4e81c" stroke-width="2.4" stroke-linejoin="round" stroke-linecap="round"/>
<polyline points="593.0,202.7 597.5,206.5 602.5,210.0 611.0,209.2 617.5,207.5 624.0,206.5 630.0,206.1" fill="none" stroke="#e81010" stroke-width="2.4" stroke-linejoin="round" stroke-linecap="round"/>
<polyline points="630.0,206.1 632.5,206.0 636.0,207.1" fill="none" stroke="#f4e81c" stroke-width="2.4" stroke-linejoin="round" stroke-linecap="round"/>
<polyline points="636.0,207.1 637.5,207.5 647.5,209.2 656.0,212.2 662.5,214.2 668.0,219.5 671.5,221.5 676.0,221.5 679.0,218.5 683.0,214.0" fill="none" stroke="#e81010" stroke-width="2.4" stroke-linejoin="round" stroke-linecap="round"/>
<line x1="8.0" y1="114.0" x2="683.0" y2="204.5" stroke="#cc1818" stroke-width="1.1"/>
<line x1="8" y1="114" x2="8" y2="119" stroke="#300060" stroke-width="2"/>
<line x1="683.5" y1="82" x2="683.5" y2="224" stroke="#18188c" stroke-width="1.2" stroke-dasharray="3.3,2.8"/>
<line x1="683.5" y1="204" x2="683.5" y2="215" stroke="#1010a0" stroke-width="2"/>
</g></svg>
<div style="position:absolute;left:4px;top:239px;width:339px;height:189px;border:1px solid #fff;box-sizing:border-box;"></div>
<div style="position:absolute;left:3px;top:238px;width:339px;height:189px;border:1px solid #aca899;box-sizing:border-box;"></div>
<div style="position:absolute;left:10.75px;top:236px;width:56px;height:5px;background:#ece9d8;"></div>
<span class="t" style="left:13.28px;top:231.00px;font-size:13px;color:#000;transform:scaleX(0.7816);">Transmitter</span>
<div style="position:absolute;left:11px;top:254px;width:268px;height:9px;box-sizing:border-box;border:1px solid;border-color:#8c8a80 #fff #fff #8c8a80;background:#ece9d8;"></div>
<div style="position:absolute;left:16px;top:256px;width:16.8px;height:4px;background:#0a8a0a;"></div>
<div style="position:absolute;left:37.5px;top:256px;width:16.8px;height:4px;background:#0a8a0a;"></div>
<div style="position:absolute;left:59.5px;top:256px;width:16.8px;height:4px;background:#0a8a0a;"></div>
<div style="position:absolute;left:81px;top:256px;width:16.8px;height:4px;background:#0a8a0a;"></div>
<div style="position:absolute;left:103px;top:256px;width:16.8px;height:4px;background:#0a8a0a;"></div>
<div style="position:absolute;left:124.5px;top:256px;width:16.8px;height:4px;background:#0a8a0a;"></div>
<div style="position:absolute;left:146.5px;top:256px;width:16.8px;height:4px;background:#0a8a0a;"></div>
<div style="position:absolute;left:168px;top:256px;width:16.8px;height:4px;background:#0a8a0a;"></div>
<div style="position:absolute;left:190px;top:256px;width:16.8px;height:4px;background:#0a8a0a;"></div>
<div style="position:absolute;left:211.5px;top:256px;width:16.8px;height:4px;background:#8c0c0c;"></div>
<div style="position:absolute;left:233.5px;top:256px;width:16.8px;height:4px;background:#8c0c0c;"></div>
<div style="position:absolute;left:255px;top:256px;width:16.8px;height:4px;background:#8c0c0c;"></div>
<span class="t" style="left:282.97px;top:250.50px;font-size:13px;color:#d01818;transform:scaleX(0.8805);">S0</span>
<div style="position:absolute;left:11px;top:269px;width:317px;height:21px;box-sizing:border-box;background:#fff;border:1px solid;border-color:#aca899 #fff #fff #aca899;"></div>
<div style="position:absolute;left:12px;top:270px;width:315px;height:19px;box-sizing:border-box;background:#fff;border:1px solid;border-color:#716f64 #f1efe2 #f1efe2 #716f64;"></div>
<div style="position:absolute;left:309px;top:271px;width:17px;height:17px;box-sizing:border-box;background:#ece9d8;border:1px solid;border-color:#fff #716f64 #716f64 #fff;"></div>
<div style="position:absolute;left:310px;top:272px;width:15px;height:15px;box-sizing:border-box;background:#ece9d8;border:1px solid;border-color:#f1efe2 #aca899 #aca899 #f1efe2;"></div>
<svg style="position:absolute;left:314px;top:278px" width="7" height="4" viewBox="0 0 7 4"><polygon points="0,0 7,0 3.5,4" fill="#000"/></svg>
<span class="t" style="left:15.01px;top:272.00px;font-size:13px;color:#000;transform:scaleX(0.8091);">Mormaço Posse Godoy</span>
<span class="t" style="left:11.26px;top:295.00px;font-size:13px;color:#000;transform:scaleX(0.8136);">Role</span>
<span class="t" style="left:11.27px;top:311.00px;font-size:13px;color:#000;transform:scaleX(0.7996);">Tx system name</span>
<span class="t" style="left:11.26px;top:327.00px;font-size:13px;color:#000;transform:scaleX(0.8184);">Tx power</span>
<span class="t" style="left:11.27px;top:343.00px;font-size:13px;color:#000;transform:scaleX(0.8040);">Line loss</span>
<span class="t" style="left:11.26px;top:359.00px;font-size:13px;color:#000;transform:scaleX(0.8222);">Antenna gain</span>
<span class="t" style="left:11.26px;top:375.00px;font-size:13px;color:#000;transform:scaleX(0.8237);">Radiated power</span>
<span class="t" style="left:151.53px;top:295.00px;font-size:13px;color:#000080;transform:scaleX(0.7754);">Command</span>
<span class="t" style="left:151.51px;top:311.00px;font-size:13px;color:#000080;transform:scaleX(0.8190);">Direcional 24 dbi</span>
<span class="t" style="left:151.48px;top:327.00px;font-size:13px;color:#000080;transform:scaleX(0.8693);">0,25 W</span>
<span class="t" style="left:251.31px;top:327.00px;font-size:13px;color:#000080;transform:scaleX(0.8223);">23,98 dBm</span>
<span class="t" style="left:151.53px;top:343.00px;font-size:13px;color:#000080;transform:scaleX(0.7853);">2 dB</span>
<span class="t" style="left:151.51px;top:359.00px;font-size:13px;color:#000080;transform:scaleX(0.8134);">9,56 dBi</span>
<span class="t" style="left:251.30px;top:359.00px;font-size:13px;color:#000080;transform:scaleX(0.8378);">7,41 dBd</span>
<span class="t" style="left:151.50px;top:375.00px;font-size:13px;color:#000080;transform:scaleX(0.8342);">EIRP=1,43 W</span>
<span class="t" style="left:251.29px;top:375.00px;font-size:13px;color:#000080;transform:scaleX(0.8423);">ERP=0,87 W</span>
<div style="position:absolute;left:315px;top:355px;width:19px;height:18px;box-sizing:border-box;background:#ece9d8;border:1px solid;border-color:#fff #716f64 #716f64 #fff;"></div>
<div style="position:absolute;left:316px;top:356px;width:17px;height:16px;box-sizing:border-box;background:#ece9d8;border:1px solid;border-color:#f1efe2 #aca899 #aca899 #f1efe2;"></div>
<span class="t" style="left:321.53px;top:356.19px;font-size:11px;color:#000;transform:scaleX(0.9341);">+</span>
<span class="t" style="left:11.01px;top:402.25px;font-size:13px;color:#000;transform:scaleX(0.8095);">Antenna height (m)</span>
<div style="position:absolute;left:150px;top:399px;width:81px;height:19px;box-sizing:border-box;background:#fff;border:1px solid;border-color:#aca899 #fff #fff #aca899;"></div>
<div style="position:absolute;left:151px;top:400px;width:79px;height:17px;box-sizing:border-box;background:#fff;border:1px solid;border-color:#716f64 #f1efe2 #f1efe2 #716f64;"></div>
<span class="t" style="left:155.01px;top:401.75px;font-size:13px;color:#000;transform:scaleX(0.8092);">10</span>
<div style="position:absolute;left:251px;top:395px;width:85px;height:26px;box-sizing:border-box;background:#ece9d8;border:1px solid;border-color:#fff #716f64 #716f64 #fff;"></div>
<div style="position:absolute;left:252px;top:396px;width:83px;height:24px;box-sizing:border-box;background:#ece9d8;border:1px solid;border-color:#f1efe2 #aca899 #aca899 #f1efe2;"></div>
<span class="t" style="left:279.51px;top:400.50px;font-size:13px;color:#000;transform:scaleX(0.8150);">Apply</span>
<div style="position:absolute;left:349px;top:239px;width:339px;height:189px;border:1px solid #fff;box-sizing:border-box;"></div>
<div style="position:absolute;left:348px;top:238px;width:339px;height:189px;border:1px solid #aca899;box-sizing:border-box;"></div>
<div style="position:absolute;left:354.7px;top:236px;width:48.7px;height:5px;background:#ece9d8;"></div>
<span class="t" style="left:357.19px;top:231.00px;font-size:13px;color:#000;transform:scaleX(0.8520);">Receiver</span>
<div style="position:absolute;left:356px;top:254px;width:268px;height:9px;box-sizing:border-box;border:1px solid;border-color:#8c8a80 #fff #fff #8c8a80;background:#ece9d8;"></div>
<div style="position:absolute;left:361px;top:256px;width:16.8px;height:4px;background:#0a8a0a;"></div>
<div style="position:absolute;left:382.5px;top:256px;width:16.8px;height:4px;background:#0a8a0a;"></div>
<div style="position:absolute;left:404.5px;top:256px;width:16.8px;height:4px;background:#0a8a0a;"></div>
<div style="position:absolute;left:426px;top:256px;width:16.8px;height:4px;background:#0a8a0a;"></div>
<div style="position:absolute;left:448px;top:256px;width:16.8px;height:4px;background:#0a8a0a;"></div>
<div style="position:absolute;left:469.5px;top:256px;width:16.8px;height:4px;background:#0a8a0a;"></div>
<div style="position:absolute;left:491.5px;top:256px;width:16.8px;height:4px;background:#0a8a0a;"></div>
<div style="position:absolute;left:513px;top:256px;width:16.8px;height:4px;background:#0a8a0a;"></div>
<div style="position:absolute;left:535px;top:256px;width:16.8px;height:4px;background:#0a8a0a;"></div>
<div style="position:absolute;left:556.5px;top:256px;width:16.8px;height:4px;background:#8c0c0c;"></div>
<div style="position:absolute;left:578.5px;top:256px;width:16.8px;height:4px;background:#8c0c0c;"></div>
<div style="position:absolute;left:600px;top:256px;width:16.8px;height:4px;background:#8c0c0c;"></div>
<span class="t" style="left:627.97px;top:250.50px;font-size:13px;color:#d01818;transform:scaleX(0.8805);">S0</span>
<div style="position:absolute;left:356px;top:269px;width:317px;height:21px;box-sizing:border-box;background:#fff;border:1px solid;border-color:#aca899 #fff #fff #aca899;"></div>
<div style="position:absolute;left:357px;top:270px;width:315px;height:19px;box-sizing:border-box;background:#fff;border:1px solid;border-color:#716f64 #f1efe2 #f1efe2 #716f64;"></div>
<div style="position:absolute;left:654px;top:271px;width:17px;height:17px;box-sizing:border-box;background:#ece9d8;border:1px solid;border-color:#fff #716f64 #716f64 #fff;"></div>
<div style="position:absolute;left:655px;top:272px;width:15px;height:15px;box-sizing:border-box;background:#ece9d8;border:1px solid;border-color:#f1efe2 #aca899 #aca899 #f1efe2;"></div>
<svg style="position:absolute;left:659px;top:278px" width="7" height="4" viewBox="0 0 7 4"><polygon points="0,0 7,0 3.5,4" fill="#000"/></svg>
<span class="t" style="left:359.81px;top:272.00px;font-size:13px;color:#000;transform:scaleX(0.8193);">Victor Graeff</span>
<span class="t" style="left:356.26px;top:295.00px;font-size:13px;color:#000;transform:scaleX(0.8136);">Role</span>
<span class="t" style="left:356.27px;top:311.00px;font-size:13px;color:#000;transform:scaleX(0.8016);">Rx system name</span>
<span class="t" style="left:356.26px;top:327.00px;font-size:13px;color:#000;transform:scaleX(0.8159);">Required E Field</span>
<span class="t" style="left:356.26px;top:343.00px;font-size:13px;color:#000;transform:scaleX(0.8222);">Antenna gain</span>
<span class="t" style="left:356.27px;top:359.00px;font-size:13px;color:#000;transform:scaleX(0.8040);">Line loss</span>
<span class="t" style="left:356.25px;top:375.00px;font-size:13px;color:#000;transform:scaleX(0.8253);">Rx sensitivity</span>
<span class="t" style="left:496.53px;top:295.00px;font-size:13px;color:#000080;transform:scaleX(0.7754);">Command</span>
<span class="t" style="left:496.51px;top:311.00px;font-size:13px;color:#000080;transform:scaleX(0.8190);">Direcional 24 dbi</span>
<span class="t" style="left:496.50px;top:327.00px;font-size:13px;color:#000080;transform:scaleX(0.8409);">42,83 dBµV/m</span>
<span class="t" style="left:496.50px;top:343.00px;font-size:13px;color:#000080;transform:scaleX(0.8301);">20,07 dBi</span>
<span class="t" style="left:596.30px;top:343.00px;font-size:13px;color:#000080;transform:scaleX(0.8368);">17,92 dBd</span>
<span class="t" style="left:496.53px;top:359.00px;font-size:13px;color:#000080;transform:scaleX(0.7853);">2 dB</span>
<span class="t" style="left:496.50px;top:375.00px;font-size:13px;color:#000080;transform:scaleX(0.8268);">14,1254 µV</span>
<span class="t" style="left:596.31px;top:375.00px;font-size:13px;color:#000080;transform:scaleX(0.8101);">-84 dBm</span>
<div style="position:absolute;left:660px;top:339px;width:19px;height:18px;box-sizing:border-box;background:#ece9d8;border:1px solid;border-color:#fff #716f64 #716f64 #fff;"></div>
<div style="position:absolute;left:661px;top:340px;width:17px;height:16px;box-sizing:border-box;background:#ece9d8;border:1px solid;border-color:#f1efe2 #aca899 #aca899 #f1efe2;"></div>
<span class="t" style="left:666.53px;top:340.19px;font-size:11px;color:#000;transform:scaleX(0.9341);">+</span>
<span class="t" style="left:356.01px;top:402.25px;font-size:13px;color:#000;transform:scaleX(0.8095);">Antenna height (m)</span>
<div style="position:absolute;left:495px;top:399px;width:81px;height:19px;box-sizing:border-box;background:#fff;border:1px solid;border-color:#aca899 #fff #fff #aca899;"></div>
<div style="position:absolute;left:496px;top:400px;width:79px;height:17px;box-sizing:border-box;background:#fff;border:1px solid;border-color:#716f64 #f1efe2 #f1efe2 #716f64;"></div>
<span class="t" style="left:500.01px;top:401.75px;font-size:13px;color:#000;transform:scaleX(0.8092);">20</span>
<div style="position:absolute;left:596px;top:395px;width:85px;height:26px;box-sizing:border-box;background:#ece9d8;border:1px solid;border-color:#fff #716f64 #716f64 #fff;"></div>
<div style="position:absolute;left:597px;top:396px;width:83px;height:24px;box-sizing:border-box;background:#ece9d8;border:1px solid;border-color:#f1efe2 #aca899 #aca899 #f1efe2;"></div>
<span class="t" style="left:624.51px;top:400.50px;font-size:13px;color:#000;transform:scaleX(0.8150);">Apply</span>
<div style="position:absolute;left:4px;top:439px;width:339px;height:50px;border:1px solid #fff;box-sizing:border-box;"></div>
<div style="position:absolute;left:3px;top:438px;width:339px;height:50px;border:1px solid #aca899;box-sizing:border-box;"></div>
<div style="position:absolute;left:10px;top:436px;width:21.8px;height:5px;background:#ece9d8;"></div>
<span class="t" style="left:12.50px;top:431.00px;font-size:13px;color:#000;transform:scaleX(0.8305);">Net</span>
<div style="position:absolute;left:19px;top:457px;width:309px;height:21px;box-sizing:border-box;background:#fff;border:1px solid;border-color:#aca899 #fff #fff #aca899;"></div>
<div style="position:absolute;left:20px;top:458px;width:307px;height:19px;box-sizing:border-box;background:#fff;border:1px solid;border-color:#716f64 #f1efe2 #f1efe2 #716f64;"></div>
<div style="position:absolute;left:309px;top:459px;width:17px;height:17px;box-sizing:border-box;background:#ece9d8;border:1px solid;border-color:#fff #716f64 #716f64 #fff;"></div>
<div style="position:absolute;left:310px;top:460px;width:15px;height:15px;box-sizing:border-box;background:#ece9d8;border:1px solid;border-color:#f1efe2 #aca899 #aca899 #f1efe2;"></div>
<svg style="position:absolute;left:314px;top:466px" width="7" height="4" viewBox="0 0 7 4"><polygon points="0,0 7,0 3.5,4" fill="#000"/></svg>
<span class="t" style="left:23.21px;top:460.00px;font-size:13px;color:#000;transform:scaleX(0.8947);">Tecwave</span>
<div style="position:absolute;left:349px;top:439px;width:339px;height:50px;border:1px solid #fff;box-sizing:border-box;"></div>
<div style="position:absolute;left:348px;top:438px;width:339px;height:50px;border:1px solid #aca899;box-sizing:border-box;"></div>
<div style="position:absolute;left:355px;top:436px;width:86px;height:5px;background:#ece9d8;"></div>
<span class="t" style="left:357.52px;top:431.00px;font-size:13px;color:#000;transform:scaleX(0.8067);">Frequency (MHz)</span>
<span class="t" style="left:364.53px;top:446.50px;font-size:13px;color:#000;transform:scaleX(0.7776);">Minimum</span>
<span class="t" style="left:471.53px;top:446.50px;font-size:13px;color:#000;transform:scaleX(0.7810);">Maximum</span>
<div style="position:absolute;left:364px;top:465px;width:79px;height:17px;box-sizing:border-box;background:#fff;border:1px solid;border-color:#aca899 #fff #fff #aca899;"></div>
<div style="position:absolute;left:365px;top:466px;width:77px;height:15px;box-sizing:border-box;background:#fff;border:1px solid;border-color:#716f64 #f1efe2 #f1efe2 #716f64;"></div>
<div style="position:absolute;left:471px;top:465px;width:80px;height:17px;box-sizing:border-box;background:#fff;border:1px solid;border-color:#aca899 #fff #fff #aca899;"></div>
<div style="position:absolute;left:472px;top:466px;width:78px;height:15px;box-sizing:border-box;background:#fff;border:1px solid;border-color:#716f64 #f1efe2 #f1efe2 #716f64;"></div>
<span class="t" style="left:368.27px;top:465.75px;font-size:13px;color:#000;transform:scaleX(0.7953);">2400</span>
<span class="t" style="left:475.27px;top:465.75px;font-size:13px;color:#000;transform:scaleX(0.7953);">2450</span>
<div style="position:absolute;left:585px;top:449px;width:89px;height:29px;box-sizing:border-box;background:#ece9d8;border:1px solid;border-color:#fff #716f64 #716f64 #fff;"></div>
<div style="position:absolute;left:586px;top:450px;width:87px;height:27px;box-sizing:border-box;background:#ece9d8;border:1px solid;border-color:#f1efe2 #aca899 #aca899 #f1efe2;"></div>
<span class="t" style="left:615.51px;top:455.25px;font-size:13px;color:#000;transform:scaleX(0.8226);">Apply</span>
</body></html>
